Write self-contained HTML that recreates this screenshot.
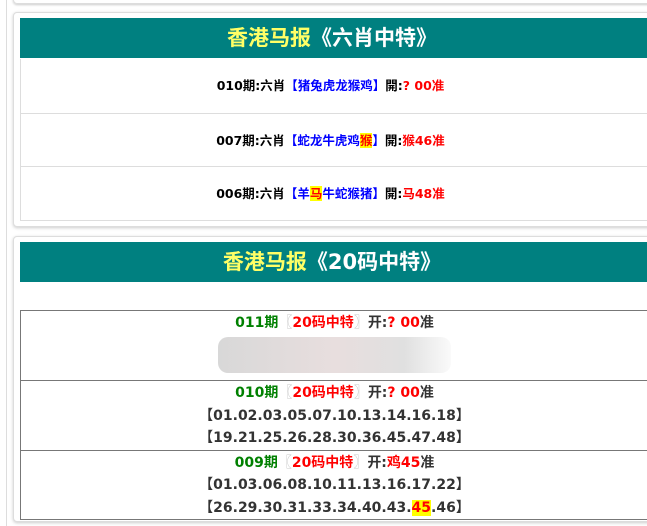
<!DOCTYPE html>
<html><head><meta charset="utf-8"><style>
*{margin:0;padding:0;box-sizing:border-box}
body{width:647px;height:526px;overflow:hidden;background:#fff;font-family:"Liberation Sans","Noto Sans CJK SC",sans-serif;position:relative}
.vl{position:absolute;left:6px;top:0;width:1px;height:526px;background:#ddd}
.top{position:absolute;left:13px;top:-10px;width:640px;height:14px;border:1px solid #ddd;border-radius:4px;box-shadow:0 1px 2px #ccc}
.card{position:absolute;left:13px;width:640px;border:1px solid #ddd;border-radius:4px;box-shadow:0 1px 3px #ccc;background:#fff}
.hd{position:absolute;left:6px;width:634px;height:40px;background:#008080;color:#fff;font-weight:bold;font-size:21px;text-align:center;line-height:40px;font-family:"DejaVu Sans","Noto Sans CJK SC",sans-serif;padding-right:10px}
.hd .y{color:#ffff66}
.row{position:absolute;left:6px;width:634px;border-bottom:1px solid #ddd;border-left:1px solid #ddd;text-align:center;font-size:12.5px;font-weight:bold;color:#000;font-family:"DejaVu Sans","Noto Sans CJK SC",sans-serif;padding-right:14px}
.b{color:#0000ff}.r{color:#ff0000}.g{color:#008000}.hl{background:#ffff00;color:#ff0000}
table{position:absolute;left:6px;width:634px;border-collapse:collapse}
td{border:1px solid #777;border-right:none;text-align:center;font-size:14px;font-weight:bold;color:#333;line-height:22.5px;vertical-align:top;padding-top:1px;font-family:"DejaVu Sans","Noto Sans CJK SC",sans-serif;padding-right:6px}
.gr{color:#bbb;font-weight:normal}
.blur{display:inline-block;width:233px;height:36px;border-radius:10px;background:linear-gradient(90deg,#d8d8d8,#e8dede 50%,#e0e0e0 80%,#fafafa);margin-top:2px}
</style></head><body>
<div class="vl"></div>
<div class="top"></div>
<div class="card" style="top:12px;height:215px">
 <div class="hd" style="top:5px"><span class="y">香港马报</span>《六肖中特》</div>
 <div class="row" style="top:46px;height:55px;line-height:54px">010期:六肖<span class="b">【猪兔虎龙猴鸡】</span>開:<span class="r">? 00准</span></div>
 <div class="row" style="top:101px;height:53px;line-height:54px">007期:六肖<span class="b">【蛇龙牛虎鸡<span class="hl">猴</span>】</span>開:<span class="r">猴46准</span></div>
 <div class="row" style="top:154px;height:54px;line-height:54px">006期:六肖<span class="b">【羊<span class="hl">马</span>牛蛇猴猪】</span>開:<span class="r">马48准</span></div>
</div>
<div class="card" style="top:236px;height:286px">
 <div class="hd" style="top:5px"><span class="y">香港马报</span>《20码中特》</div>
 <table style="top:73px">
 <tr><td style="height:70px"><span class="g">011期</span><span class="gr">〖</span><span class="r">20码中特</span><span class="gr">〗</span>开:<span class="r">? 00</span>准<br><span class="blur"></span></td></tr>
 <tr><td style="height:68px"><span class="g">010期</span><span class="gr">〖</span><span class="r">20码中特</span><span class="gr">〗</span>开:<span class="r">? 00</span>准<br>【01.02.03.05.07.10.13.14.16.18】<br>【19.21.25.26.28.30.36.45.47.48】</td></tr>
 <tr><td style="height:69px"><span class="g">009期</span><span class="gr">〖</span><span class="r">20码中特</span><span class="gr">〗</span>开:<span class="r">鸡45</span>准<br>【01.03.06.08.10.11.13.16.17.22】<br>【26.29.30.31.33.34.40.43.<span class="hl">45</span>.46】</td></tr>
 </table>
</div>
</body></html>
